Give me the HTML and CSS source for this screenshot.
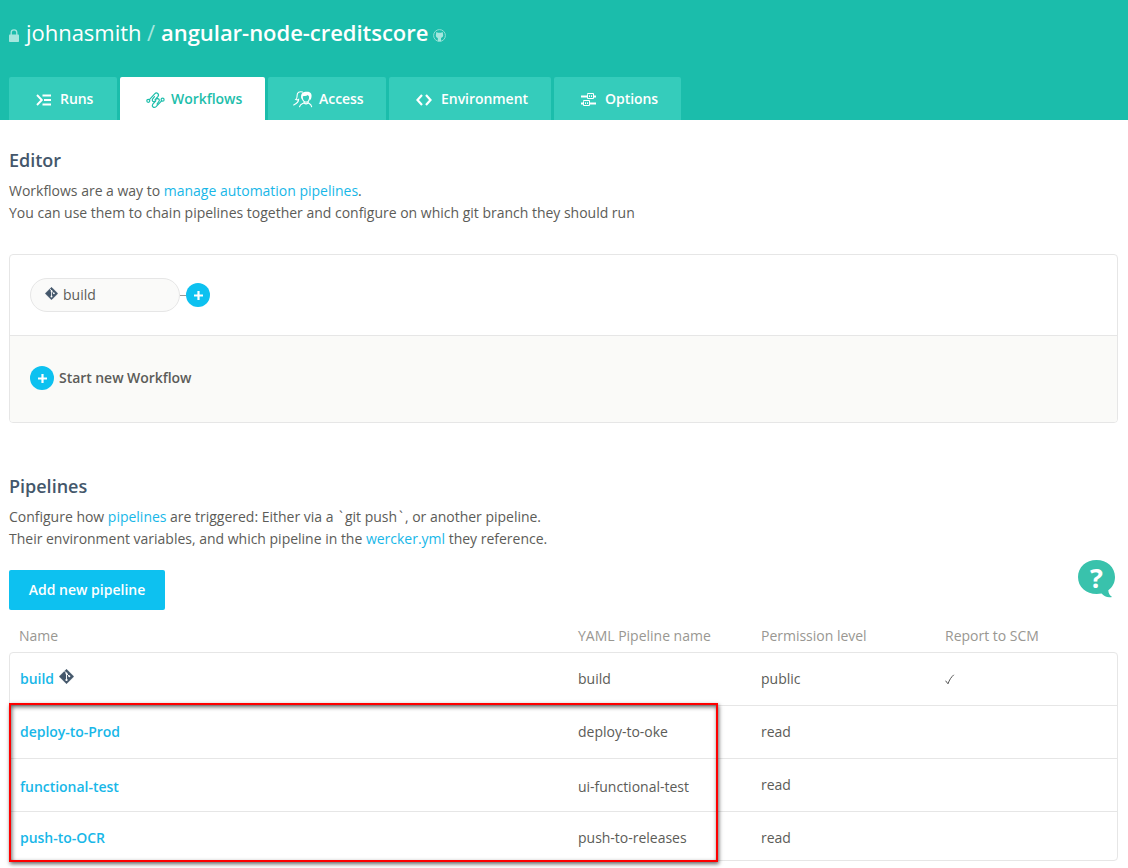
FILE: index.html
```html
<!DOCTYPE html>
<html lang="en">
<head>
<meta charset="utf-8">
<title>angular-node-creditscore</title>
<link rel="stylesheet" href="styles.css">
</head>
<body>
<svg width="0" height="0" class="sprite">
  <symbol id="git" viewBox="0 0 16 16">
    <path fill="#44576b" d="M8 .3 15.700 8 8 15.700.3 8z" stroke="#44576b" stroke-width=".6" stroke-linejoin="round"/>
    <path d="M6 2.300 8 4.400V12M8.200 5l2.800 2.800" stroke="#fff" stroke-width="1" fill="none"/>
    <circle cx="8" cy="4.800" r="1.100" fill="#fff"/><circle cx="8" cy="11.600" r="1.200" fill="#fff"/><circle cx="11" cy="7.800" r="1.100" fill="#fff"/>
  </symbol>
  <symbol id="plus" viewBox="0 0 24 24">
    <circle cx="12" cy="12" r="12" fill="#0dc1f0"/>
    <path d="M12.500 8v9M8 12.500h9" stroke="#fff" stroke-width="2.200"/>
  </symbol>
</svg>
<header class="header">
  <h1 class="title">
    <svg class="lock" viewBox="0 0 10 13"><path d="M2.200 6V3.600a2.800 2.800 0 0 1 5.600 0V6" fill="none" stroke="#a5e7de" stroke-width="1.300"/><rect y="5.600" width="10" height="7.400" rx=".8" fill="#a5e7de"/></svg>
    <span class="owner">johnasmith</span>
    <span class="slash">/</span>
    <span class="repo">angular-node-creditscore</span>
    <svg class="github" viewBox="0 0 13 13"><circle cx="6.500" cy="6.500" r="5.900" fill="none" stroke="#8fe0d5"/><path fill="#a5e7de" d="M3.300 3.100 5 3.800h3l1.700-.7.3 2c.6 2-.2 3.500-2 3.800l.2 3.300H4.800V9C3 8.600 2.500 7 3 5z"/></svg>
  </h1>
  <nav class="tabs">
    <a class="tab runs"><svg width="16" height="12" viewBox="0 0 16 12"><path d="M1 1l4.800 5L1 11M6.500 1.500H15M8 6h7M6.500 10.500H15" fill="none" stroke="#fff" stroke-width="1.900"/></svg><span>Runs</span></a>
    <a class="tab workflows active"><svg width="20" height="18" viewBox="0 0 20 18"><g fill="none" stroke="#1dbeab" stroke-width="1.200" stroke-linecap="round"><circle cx="2.300" cy="9.800" r="1.500"/><circle cx="16.600" cy="8.700" r="1.500"/><path d="M3.400 8.700 8.700 2.800c2-2 4.900.1 3.300 2.500L9 9M8.500 5.600 6.700 7.800c-1.200 1.900.1 3.200 2.100 2.700M10.500 8c2-1 3.800.8 2.300 2.700L11 13M9.800 9.800l-3 3.300c-1.500 2.400 1.100 4.500 3.300 2.500l5.500-5.800"/></g></svg><span>Workflows</span></a>
    <a class="tab access"><svg width="20" height="17" viewBox="0 0 20 17"><g fill="none" stroke="#fff" stroke-width="1.100" stroke-linecap="round"><path d="M9.500 1.100C6.500-.1 4 1.700 4.100 4.600c.1 2-.3 3.200-1.400 4 1.200.5 2.100.4 2.900-.2.100 2.700-1.300 3.600-4.900 5.600M9.300 6c-.1 2 .5 3.300 1.700 4.300v1.600c-1.500 1-3.700 1-4.500 3.900M15.200 10.300v1.600c1.200.9 2.900.9 3.500 3.900M11 12c1.300 1.200 2.800 1.200 4.200 0M11 10.300c1.300 1.100 2.900 1.100 4.200 0 1-.9 1.400-2.300 1.500-4"/></g><path fill="#fff" d="M8.600 8.500c-1.400-4 0-7.700 3.900-7.700 3.700-.8 6.700 1.200 6 4.900-.2 1.700-.8 2.800-1.700 3.700.1-2.700-.7-4.100-2-5.300-1.700 1.500-3.900.5-5.200 1.600-.5.900-.8 1.700-1 2.800z"/></svg><span>Access</span></a>
    <a class="tab environment"><svg width="16" height="12" viewBox="0 0 16 12"><path d="M6 1 1.500 6 6 11M10 1l4.500 5-4.500 5" fill="none" stroke="#fff" stroke-width="2.200"/></svg><span>Environment</span></a>
    <a class="tab options"><svg width="15" height="14" viewBox="0 0 15 14"><path d="M0 3.500h6M12 3.500h3M0 10.500h2M9 10.500h6" stroke="#fff" stroke-width="2"/><path d="M6.500 1.500v-1h6v5h-6zM2.500 8.500v-1h6v5h-6zM8.500 2.300v1.700M10.500 2.300v1.700M4.500 9.300v1.700M6.500 9.300v1.700" fill="none" stroke="#fff"/></svg><span>Options</span></a>
  </nav>
</header>
<main class="content">
  <h2>Editor</h2>
  <p>Workflows are a way to <a>manage automation pipelines</a>.<br>You can use them to chain pipelines together and configure on which git branch they should run</p>
  <section class="editor">
    <div class="flow">
      <div class="node"><svg class="git-small"><use href="#git"/></svg><span>build</span></div>
      <i class="connector"></i>
      <svg class="plus"><use href="#plus"/></svg>
    </div>
    <div class="start"><svg class="plus"><use href="#plus"/></svg><strong>Start new Workflow</strong></div>
  </section>
  <h2>Pipelines</h2>
  <p>Configure how <a>pipelines</a> are triggered: Either via a <span class="tick">`</span>git push<span class="tick">`</span>, or another pipeline.<br>Their environment variables, and which pipeline in the <a>wercker.yml</a> they reference.</p>
  <button class="add">Add new pipeline</button>
  <div class="grid head"><span>Name</span><span>YAML Pipeline name</span><span>Permission level</span><span>Report to SCM</span></div>
  <section class="table">
    <div class="grid row"><span class="name">build<svg class="git-large"><use href="#git"/></svg></span><span>build</span><span>public</span><svg class="check" viewBox="0 0 10 11"><path d="M.5 6.700 3 9.800C4.300 6 6.300 3 8.800.8" fill="none" stroke="#555" stroke-width="1"/></svg></div>
    <div class="grid row"><span class="name">deploy-to-Prod</span><span>deploy-to-oke</span><span>read</span></div>
    <div class="grid row shifted"><span class="name">functional-test</span><span>ui-functional-test</span><span>read</span></div>
    <div class="grid row last"><span class="name">push-to-OCR</span><span>push-to-releases</span><span>read</span></div>
  </section>
</main>
<div class="highlight"></div>
<div class="help"><svg width="38" height="38" viewBox="0 0 38 38"><path fill="#39c2ac" d="M18.500 0C29 0 37 7.300 37 17c0 5.700-2.500 10.200-6.700 13.200.2 3.300 1.400 5.300 3.800 6.700-4 1.300-8-.4-10.500-3.300C10.500 36 0 28.500 0 17 0 7.300 8 0 18.500 0z"/></svg><b>?</b></div>
</body>
</html>
```
FILE: styles.css
```css
* { box-sizing: border-box; }
body { margin: 0; height: 868px; overflow: hidden; position: relative; background: #fff; color: #5c5c58; font: 14px/22px "Open Sans", sans-serif; letter-spacing: -0.01px; }
.sprite { position: absolute; }
.header { height: 120px; background: #1bbdab; color: #fff; padding: 0 9px; display: flex; flex-direction: column; justify-content: space-between; }
.title { display: flex; margin: 0; padding-top: 17px; font-size: 22px; line-height: 30px; font-weight: 400; white-space: nowrap; letter-spacing: -0.03px; }
.lock { width: 10px; height: 13px; margin: 12px 7px 0 0; }
.owner { width: 115px; }
.slash { color: #a5e7de; width: 20px; padding-left: 6px; }
.repo { font-weight: 600; width: 267px; }
.github { width: 13px; height: 13px; margin: 12px 0 0 5px; }
.tabs { display: flex; gap: 3px; height: 43px; }
.tab { display: flex; align-items: center; background: #35ccbb; border-radius: 2px 2px 0 0; font-weight: 600; color: #fff; letter-spacing: -0.04px; }
.tab span { white-space: nowrap; }
.tab svg { position: relative; top: 1px; flex: none; }
.runs { width: 108px; padding-left: 27px; gap: 8px; }
.workflows { width: 145px; padding-left: 26px; gap: 5px; }
.access { width: 118px; padding-left: 25px; gap: 6px; }
.environment { width: 162px; padding-left: 27px; gap: 9px; }
.options { width: 127px; padding-left: 27px; gap: 9px; }
.active { background: #fff; color: #1dbeab; }
.content { padding: 28px 10px 0 9px; }
h2 { margin: 0 0 7px; font-size: 18px; line-height: 25px; font-weight: 600; color: #44576b; }
p { margin: 0; white-space: nowrap; }
a { color: #18b7e8; }
.tick { padding: 0 2px; }
.editor { margin: 30px 0 51px; height: 169px; border: 1px solid #e6e6e6; border-radius: 4px; overflow: hidden; }
.flow { height: 81px; display: flex; align-items: center; padding-left: 20px; border-bottom: 1px solid #e6e6e6; }
.node { width: 150px; height: 34px; border: 1px solid #e6e6e6; border-radius: 17px; background: #fafaf9; display: flex; align-items: center; padding-left: 14px; gap: 5px; }
.git-small { width: 13px; height: 13px; margin-bottom: 3px; }
.connector { width: 6px; height: 1px; background: #999; }
.plus { width: 24px; height: 24px; }
.start { height: 86px; display: flex; align-items: center; gap: 5px; padding: 0 0 2px 20px; background: #fafaf8; }
.start strong { font-weight: 600; letter-spacing: -0.05px; }
.add { display: block; width: 156px; height: 40px; margin: 20px 0 15px; padding: 0 0 2px; border: 0; border-radius: 2px; background: #0dc1f0; color: #fff; font: 600 14px "Open Sans", sans-serif; }
.grid { display: grid; grid-template-columns: 558px 183px 184px 1fr; align-items: center; }
.head { height: 27px; margin-left: 10px; padding-bottom: 5px; grid-template-columns: 559px 183px 184px 1fr; color: #999792; }
.table { border: 1px solid #e6e6e6; border-radius: 4px; height: 209px; }
.row { height: 53px; padding-left: 10px; border-bottom: 1px solid #e6e6e6; }
.name { display: flex; align-items: center; font-weight: 600; color: #18b7e8; letter-spacing: -0.03px; }
.git-large { width: 15px; height: 15px; margin: -5px 0 0 5px; }
.check { width: 10px; height: 11px; }
.shifted span:nth-child(-n+2) { padding-top: 3px; }
.last { border: 0; height: 52px; }
.highlight { position: absolute; left: 9px; top: 703px; width: 709px; height: 159px; border: 2px solid #fe0000; box-shadow: 1px 2px 4px #0009, inset 1px 2px 4px #0009; }
.help { position: absolute; left: 1078px; top: 560px; width: 38px; height: 38px; color: #fff; }
.help svg { display: block; }
.help b { position: absolute; left: 0; top: 0; width: 37px; text-align: center; font-size: 27px; line-height: 35px; }
```
